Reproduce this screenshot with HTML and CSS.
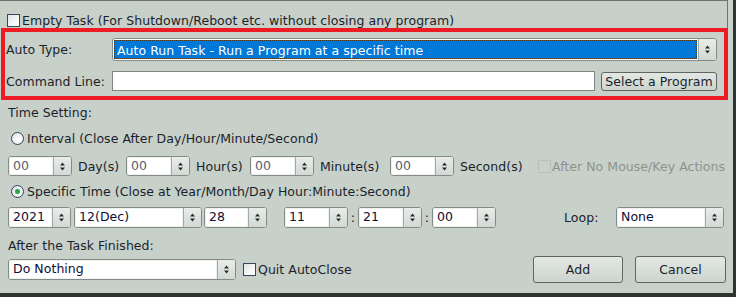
FILE: index.html
```html
<!DOCTYPE html>
<html lang="en">
<head>
    <meta charset="UTF-8">
    <title>Add Task</title>
    <link rel="stylesheet" href="styles.css">
</head>
<body>
    <div class="window">
        <div class="group-top">
            <span class="check"></span>
            <span class="check-text">Empty Task (For Shutdown/Reboot etc. without closing any program)</span>
        </div>

        <div class="highlight">
            <div class="field-row">
                <span class="field-label">Auto Type:</span>
                <div class="combo combo-type">
                    <span class="combo-value selected">Auto Run Task - Run a Program at a specific time</span>
                    <span class="spin-btn"><svg width="7" height="9" viewBox="0 0 7 9"><path d="M3.5 0.5L6 3.5H1Z M1 5.5H6L3.5 8.5Z"/></svg></span>
                </div>
            </div>
            <div class="field-row cmd-row">
                <span class="field-label">Command Line:</span>
                <div class="text-box"></div>
                <button class="btn btn-select">Select a Program</button>
            </div>
        </div>

        <div class="section-label">Time Setting:</div>

        <div class="radio-row">
            <span class="radio"></span>
            <span>Interval (Close After Day/Hour/Minute/Second)</span>
        </div>

        <div class="spin-row interval-row">
            <div class="combo w64 dim"><span class="combo-value">00</span><span class="spin-btn"><svg width="7" height="9" viewBox="0 0 7 9"><path d="M3.5 0.5L6 3.5H1Z M1 5.5H6L3.5 8.5Z"/></svg></span></div>
            <span class="unit unit-day">Day(s)</span>
            <div class="combo w64 dim"><span class="combo-value">00</span><span class="spin-btn"><svg width="7" height="9" viewBox="0 0 7 9"><path d="M3.5 0.5L6 3.5H1Z M1 5.5H6L3.5 8.5Z"/></svg></span></div>
            <span class="unit unit-hour">Hour(s)</span>
            <div class="combo w64 dim"><span class="combo-value">00</span><span class="spin-btn"><svg width="7" height="9" viewBox="0 0 7 9"><path d="M3.5 0.5L6 3.5H1Z M1 5.5H6L3.5 8.5Z"/></svg></span></div>
            <span class="unit unit-minute">Minute(s)</span>
            <div class="combo w64 dim"><span class="combo-value">00</span><span class="spin-btn"><svg width="7" height="9" viewBox="0 0 7 9"><path d="M3.5 0.5L6 3.5H1Z M1 5.5H6L3.5 8.5Z"/></svg></span></div>
            <span class="unit unit-second">Second(s)</span>
            <span class="check disabled"></span>
            <span class="disabled-text">After No Mouse/Key Actions</span>
        </div>

        <div class="radio-row specific-row">
            <span class="radio checked"></span>
            <span>Specific Time (Close at Year/Month/Day Hour:Minute:Second)</span>
        </div>

        <div class="spin-row date-row">
            <div class="combo w63"><span class="combo-value">2021</span><span class="spin-btn"><svg width="7" height="9" viewBox="0 0 7 9"><path d="M3.5 0.5L6 3.5H1Z M1 5.5H6L3.5 8.5Z"/></svg></span></div>
            <div class="combo w128 gap3"><span class="combo-value">12(Dec)</span><span class="spin-btn"><svg width="7" height="9" viewBox="0 0 7 9"><path d="M3.5 0.5L6 3.5H1Z M1 5.5H6L3.5 8.5Z"/></svg></span></div>
            <div class="combo w63 gap2"><span class="combo-value">28</span><span class="spin-btn"><svg width="7" height="9" viewBox="0 0 7 9"><path d="M3.5 0.5L6 3.5H1Z M1 5.5H6L3.5 8.5Z"/></svg></span></div>
            <div class="combo w64 gap17"><span class="combo-value">11</span><span class="spin-btn"><svg width="7" height="9" viewBox="0 0 7 9"><path d="M3.5 0.5L6 3.5H1Z M1 5.5H6L3.5 8.5Z"/></svg></span></div>
            <span class="colon">:</span>
            <div class="combo w64"><span class="combo-value">21</span><span class="spin-btn"><svg width="7" height="9" viewBox="0 0 7 9"><path d="M3.5 0.5L6 3.5H1Z M1 5.5H6L3.5 8.5Z"/></svg></span></div>
            <span class="colon">:</span>
            <div class="combo w64"><span class="combo-value">00</span><span class="spin-btn"><svg width="7" height="9" viewBox="0 0 7 9"><path d="M3.5 0.5L6 3.5H1Z M1 5.5H6L3.5 8.5Z"/></svg></span></div>
            <span class="loop-label">Loop:</span>
            <div class="combo w108"><span class="combo-value">None</span><span class="spin-btn"><svg width="7" height="9" viewBox="0 0 7 9"><path d="M3.5 0.5L6 3.5H1Z M1 5.5H6L3.5 8.5Z"/></svg></span></div>
        </div>

        <div class="section-label after-label">After the Task Finished:</div>

        <div class="bottom-row">
            <div class="combo w228"><span class="combo-value">Do Nothing</span><span class="spin-btn"><svg width="7" height="9" viewBox="0 0 7 9"><path d="M3.5 0.5L6 3.5H1Z M1 5.5H6L3.5 8.5Z"/></svg></span></div>
            <span class="check quit-check"></span>
            <span class="check-text">Quit AutoClose</span>
            <button class="btn btn-add">Add</button>
            <button class="btn btn-cancel">Cancel</button>
        </div>
    </div>
</body>
</html>
```

FILE: styles.css
```css
body {
    margin: 0;
    padding: 0;
    background-color: #c8d0ca;
    font-family: "DejaVu Sans", Verdana, sans-serif;
    font-size: 12.5px;
    letter-spacing: 0.04px;
    color: #1b1f2a;
}
.window {
    width: 736px;
    height: 297px;
    box-sizing: border-box;
    background-color: #c8d0ca;
    border-right: 3px solid #2d3431;
    border-bottom: 4px solid #2d3431;
    overflow: hidden;
}

/* top group line */
.group-top {
    width: 728px;
    height: 28px;
    box-sizing: border-box;
    border-top: 1px solid #6e7571;
    border-right: 1px solid #6e7571;
    padding: 12px 0 0 7px;
    display: flex;
    align-items: center;
    line-height: 14px;
}
.check {
    width: 13px;
    height: 13px;
    box-sizing: border-box;
    border: 1px solid #39465a;
    background: linear-gradient(135deg, #dde2e3 0%, #f6f8f8 60%, #ffffff 100%);
    flex-shrink: 0;
}
.check.disabled {
    border-color: #b9bfba;
    background: none;
}
.check-text {
    margin-left: 2px;
    white-space: nowrap;
}

/* red marked box */
.highlight {
    margin-left: 1px;
    width: 727px;
    height: 72px;
    box-sizing: border-box;
    border: 4px solid #ed1c24;
    padding: 6px 0 0 1px;
}
.field-row {
    display: flex;
    align-items: center;
    height: 23px;
}
.cmd-row {
    margin-top: 10px;
    height: 20px;
}
.field-label {
    width: 106px;
    white-space: nowrap;
}

/* combo / spin boxes */
.combo {
    display: flex;
    height: 20px;
    box-sizing: border-box;
    border: 1px solid #838b86;
    border-radius: 3px;
    background: #ffffff;
    flex-shrink: 0;
    overflow: hidden;
}
.combo-value {
    flex: 1;
    padding-left: 4px;
    line-height: 18px;
    color: #0e0e34;
    white-space: nowrap;
    box-shadow: inset 0 0 0 1px #eef1ef;
}
.dim .combo-value {
    color: #53606e;
}
.spin-btn {
    width: 17px;
    display: flex;
    align-items: center;
    justify-content: center;
    border-left: 1px solid #a2aaa4;
    background: linear-gradient(#e9edea, #d2d8d3);
}
.spin-btn svg {
    fill: #2a2d30;
}
.combo-type {
    width: 605px;
    height: 23px;
}
.combo-type .combo-value {
    margin: 1px;
    padding-left: 2px;
    line-height: 19px;
    border: 1px dotted #4a3010;
    background: #0078d7;
    color: #ffffff;
    box-shadow: none;
}
.text-box {
    width: 483px;
    height: 20px;
    box-sizing: border-box;
    border: 1px solid #7d8580;
    background: #ffffff;
}
.w63 { width: 63px; }
.w64 { width: 64px; }
.w108 { width: 108px; }
.w128 { width: 128px; }
.w228 { width: 228px; height: 21px; }
.gap2 { margin-left: 2px; }
.gap3 { margin-left: 3px; }
.gap17 { margin-left: 17px; }

/* buttons */
.btn {
    font-family: "DejaVu Sans", Verdana, sans-serif;
    font-size: 12.5px;
    letter-spacing: 0.04px;
    color: #1b1f2a;
    box-sizing: border-box;
    border: 1px solid #5e6661;
    border-radius: 3px;
    background: linear-gradient(#e3e8e4, #cdd4cf);
    padding: 0;
    cursor: pointer;
}
.btn-select {
    margin-left: 6px;
    width: 116px;
    height: 19px;
    line-height: 17px;
}
.btn-add {
    margin-left: auto;
    width: 90px;
    height: 27px;
}
.btn-cancel {
    margin-left: 12px;
    width: 91px;
    height: 27px;
}

/* time settings */
.section-label {
    margin-top: 5px;
    padding-left: 8px;
    height: 15px;
    line-height: 15px;
}
.radio-row {
    margin-top: 11px;
    padding-left: 11px;
    height: 15px;
    display: flex;
    align-items: center;
    white-space: nowrap;
}
.radio-row span + span {
    margin-left: 3px;
}
.radio {
    width: 13px;
    height: 13px;
    box-sizing: border-box;
    border: 1px solid #34435a;
    border-radius: 50%;
    background: radial-gradient(circle at 60% 60%, #ffffff 0%, #e6eaec 70%, #cfd6d8 100%);
    position: relative;
}
.radio.checked::after {
    content: "";
    position: absolute;
    left: 3px;
    top: 3px;
    width: 5px;
    height: 5px;
    border-radius: 50%;
    background: #27a348;
}
.specific-row {
    margin-top: 8px;
}
.spin-row {
    display: flex;
    align-items: center;
    padding-left: 8px;
    white-space: nowrap;
}
.interval-row {
    margin-top: 10px;
    height: 20px;
}
.unit {
    margin-left: 6px;
}
.unit-day { width: 48px; }
.unit-hour { width: 54px; }
.unit-minute { width: 70px; }
.unit-second { width: 78px; }
.disabled-text {
    margin-left: 1px;
    color: #8c938e;
}
.date-row {
    margin-top: 8px;
    height: 21px;
}
.date-row .combo {
    height: 21px;
}
.colon {
    width: 10px;
    text-align: center;
}
.loop-label {
    margin-left: 68px;
    width: 52px;
}
.after-label {
    margin-top: 10px;
}
.bottom-row {
    margin-top: 3px;
    height: 27px;
    display: flex;
    align-items: center;
    padding: 0 7px 0 8px;
    white-space: nowrap;
}
.quit-check {
    margin-left: 7px;
}
```
